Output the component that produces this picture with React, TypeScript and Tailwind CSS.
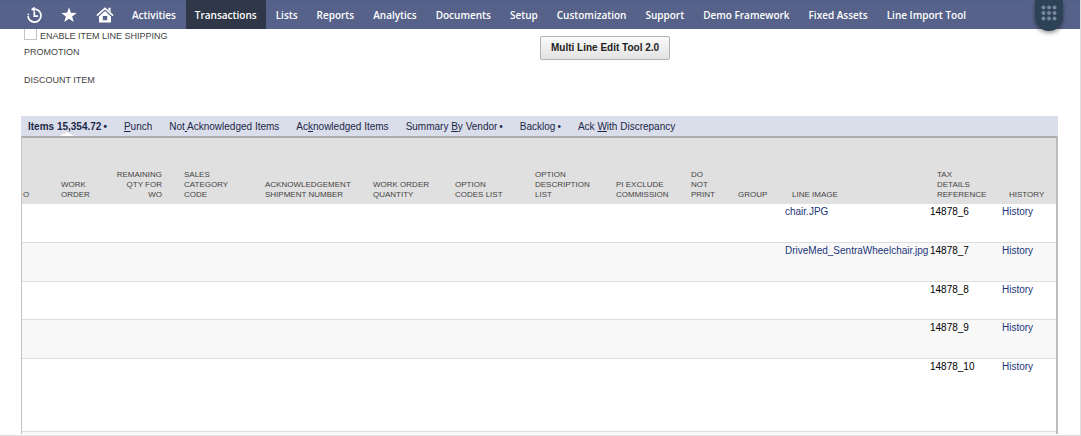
import React from "react";

const menus = [
  "Activities", "Transactions", "Lists", "Reports", "Analytics", "Documents", "Setup",
  "Customization", "Support", "Demo Framework", "Fixed Assets", "Line Import Tool",
];

type Tab = { before: string; key: string; after: string; dot?: boolean };

const tabs: Tab[] = [
  { before: "", key: "P", after: "unch" },
  { before: "Not", key: " ", after: "Acknowledged Items" },
  { before: "Ac", key: "k", after: "nowledged Items" },
  { before: "Summary ", key: "B", after: "y Vendor", dot: true },
  { before: "Backlog", key: "", after: "", dot: true },
  { before: "Ack ", key: "W", after: "ith Discrepancy" },
];

type Column = { lines: string[]; width: string; align: string };

const columns: Column[] = [
  { lines: ["O"], width: "", align: "pl-px text-left" },
  { lines: ["WORK", "ORDER"], width: "w-[55px]", align: "pl-2.5 text-left" },
  { lines: ["REMAINING", "QTY FOR", "WO"], width: "w-[68px]", align: "pr-3 text-right" },
  { lines: ["SALES", "CATEGORY", "CODE"], width: "w-[81px]", align: "pl-2.5 text-left" },
  { lines: ["ACKNOWLEDGEMENT", "SHIPMENT NUMBER"], width: "w-[108px]", align: "pl-2.5 text-left" },
  { lines: ["WORK ORDER", "QUANTITY"], width: "w-[82px]", align: "pl-2.5 text-left" },
  { lines: ["OPTION", "CODES LIST"], width: "w-[80px]", align: "pl-2.5 text-left" },
  { lines: ["OPTION", "DESCRIPTION", "LIST"], width: "w-[81px]", align: "pl-2.5 text-left" },
  { lines: ["PI EXCLUDE", "COMMISSION"], width: "w-[75px]", align: "pl-2.5 text-left" },
  { lines: ["DO", "NOT", "PRINT"], width: "w-[47px]", align: "pl-2.5 text-left" },
  { lines: ["GROUP"], width: "w-[54px]", align: "pl-2.5 text-left" },
  { lines: ["LINE IMAGE"], width: "w-[145px]", align: "pl-2.5 text-left" },
  { lines: ["TAX", "DETAILS", "REFERENCE"], width: "w-[72px]", align: "pl-2.5 text-left" },
  { lines: ["HISTORY"], width: "w-[57px]", align: "pl-2.5 text-left" },
];

const rows = [
  { image: "chair.JPG", tax: "14878_6", height: "h-[38px]" },
  { image: "DriveMed_SentraWheelchair.jpg", tax: "14878_7", height: "h-[39px]" },
  { image: "", tax: "14878_8", height: "h-[38px]" },
  { image: "", tax: "14878_9", height: "h-[39px]" },
  { image: "", tax: "14878_10", height: "h-[73px]" },
];

function HistoryIcon() {
  return (
    <svg viewBox="0 0 16 16" className="h-4 w-4" fill="none" stroke="white">
      <path d="M7 2.1H8.8A6.5 6.5 0 1 1 2 9.2" strokeWidth="1.7" />
      <path d="M8.6 -.6L5 2.2L8.6 5Z" fill="white" stroke="none" />
      <path d="M8.3 4.6V9.2H12.2" strokeWidth="1.7" />
      <path d="M2.1 8.2L2.6 6.6" strokeWidth="1.4" />
    </svg>
  );
}

function StarIcon() {
  return (
    <svg viewBox="0 0 16 16" className="h-4 w-4" fill="white">
      <path d="M8 .3L9.9 5.8L15.7 5.9L11.1 9.4L12.8 15L8 11.7L3.2 15L4.9 9.4L.3 5.9L6.1 5.8Z" />
    </svg>
  );
}

function HomeIcon() {
  return (
    <svg viewBox="0 0 18 16" className="h-4 w-[18px]" fill="none">
      <path d="M.9 8.6L9 1.3L17.1 8.6" stroke="white" strokeWidth="1.7" />
      <path d="M12.4 .8H14.6V5L12.4 3Z" fill="white" />
      <path fillRule="evenodd" d="M9 4L15 9.4V15.6H3V9.4ZM6.8 9V13.2H11.2V9Z" fill="white" />
    </svg>
  );
}

export default function App() {
  return (
    <div className="min-h-screen border-r border-b border-[#dedede] bg-white font-['Liberation_Sans',Arial,sans-serif] text-[#222]">
      <nav className="relative z-10 flex h-[29px] items-stretch gap-px border-t border-[#4b6286] bg-[#56628a] pl-[26px] font-['Open_Sans',sans-serif] text-[10px] font-semibold text-white">
        <div className="mr-2 flex items-center gap-[19px]">
          <a href="#recent" aria-label="Recent records"><HistoryIcon /></a>
          <a href="#shortcuts" aria-label="Shortcuts"><StarIcon /></a>
          <a href="#home" aria-label="Home"><HomeIcon /></a>
        </div>
        {menus.map((m) => (
          <a
            key={m}
            href="#menu"
            className={
              m === "Transactions"
                ? "-mt-px flex items-center bg-[#2f3749] px-[9px] pt-px whitespace-nowrap"
                : "flex items-center px-[9px] whitespace-nowrap"
            }
          >
            {m}
          </a>
        ))}
        <button
          aria-label="Apps"
          className="absolute -top-px right-[17px] flex h-[31px] w-7 items-start justify-center rounded-b-full bg-[#2d4257] pt-[5px] shadow-[0_2px_4px_rgba(0,0,0,0.4)]"
        >
          <svg viewBox="0 0 16 16" className="h-4 w-4" fill="#76879a">
            {[2.5, 8, 13.5].map((y) => [2.5, 8, 13.5].map((x) => <circle key={`${x}-${y}`} cx={x} cy={y} r="2" />))}
          </svg>
        </button>
      </nav>

      <section className="-mt-[3px] grid grid-cols-2 pl-6">
        <div className="text-[9px] leading-3 text-[#444]">
          <label className="flex items-center gap-[3px]">
            <input type="checkbox" className="h-3 w-[13px] appearance-none border border-[#c4c4c4] bg-white" />
            <span className="pt-1">ENABLE ITEM LINE SHIPPING</span>
          </label>
          <p className="mt-1">PROMOTION</p>
          <p className="mt-4">DISCOUNT ITEM</p>
        </div>
        <div className="-ml-3 pt-2">
          <button className="h-6 rounded-xs border border-[#b2b2b2] bg-linear-to-b from-[#fafafa] to-[#e3e3e3] px-2.5 text-[10px] font-bold">
            Multi Line Edit Tool 2.0
          </button>
        </div>
      </section>

      <main className="mt-[30px] mr-[22px] ml-[21px]">
        <div className="flex h-5 items-stretch gap-[17px] bg-[#dadeea] pl-[7px] text-[10px] whitespace-nowrap text-[#1b2748]">
          <a href="#items" className="relative flex items-center gap-0.5 font-bold">
            Items 15,354.72 <span>•</span>
            <svg viewBox="0 0 14 4" className="absolute bottom-0 left-1/2 h-1 w-3.5 -translate-x-1/2" fill="white">
              <path d="M0 4L7 0L14 4Z" />
            </svg>
          </a>
          {tabs.map((t) => (
            <a key={t.before + t.after} href="#tab" className="flex items-center gap-0.5">
              <span className="whitespace-pre">
                {t.before}
                <span className="underline">{t.key}</span>
                {t.after}
              </span>
              {t.dot && <span>•</span>}
            </a>
          ))}
        </div>
        <div className="border-t-2 border-r-2 border-l border-t-[#aeaeb0] border-r-[#bcbcbc] border-l-[#c2c2c2]">
          <table className="w-full table-fixed border-collapse text-[10px] leading-3">
            <thead>
              <tr className="h-[66px] bg-[#e0e0e0] text-[8px] leading-[10px] text-[#444]">
                {columns.map((c) => (
                  <th key={c.lines.join(" ")} className={`${c.width} ${c.align} pb-1 align-bottom font-normal whitespace-nowrap`}>
                    {c.lines.map((l) => (
                      <span key={l} className="block">{l}</span>
                    ))}
                  </th>
                ))}
              </tr>
            </thead>
            <tbody>
              {rows.map((r) => (
                <tr key={r.tax} className={`${r.height} border-b border-[#dedede] even:bg-[#f8f8f8]`}>
                  <td colSpan={11} />
                  <td className="pt-0.5 pl-[3px] align-top whitespace-nowrap">
                    {r.image && <a href="#image" className="text-[#1c3678]">{r.image}</a>}
                  </td>
                  <td className="pt-0.5 pl-[3px] align-top text-black">{r.tax}</td>
                  <td className="pt-0.5 pl-[3px] align-top">
                    <a href="#history" className="text-[#1c3678]">History</a>
                  </td>
                </tr>
              ))}
              <tr className="h-[3px] bg-[#f8f8f8]">
                <td colSpan={14} className="p-0" />
              </tr>
            </tbody>
          </table>
        </div>
      </main>
    </div>
  );
}
